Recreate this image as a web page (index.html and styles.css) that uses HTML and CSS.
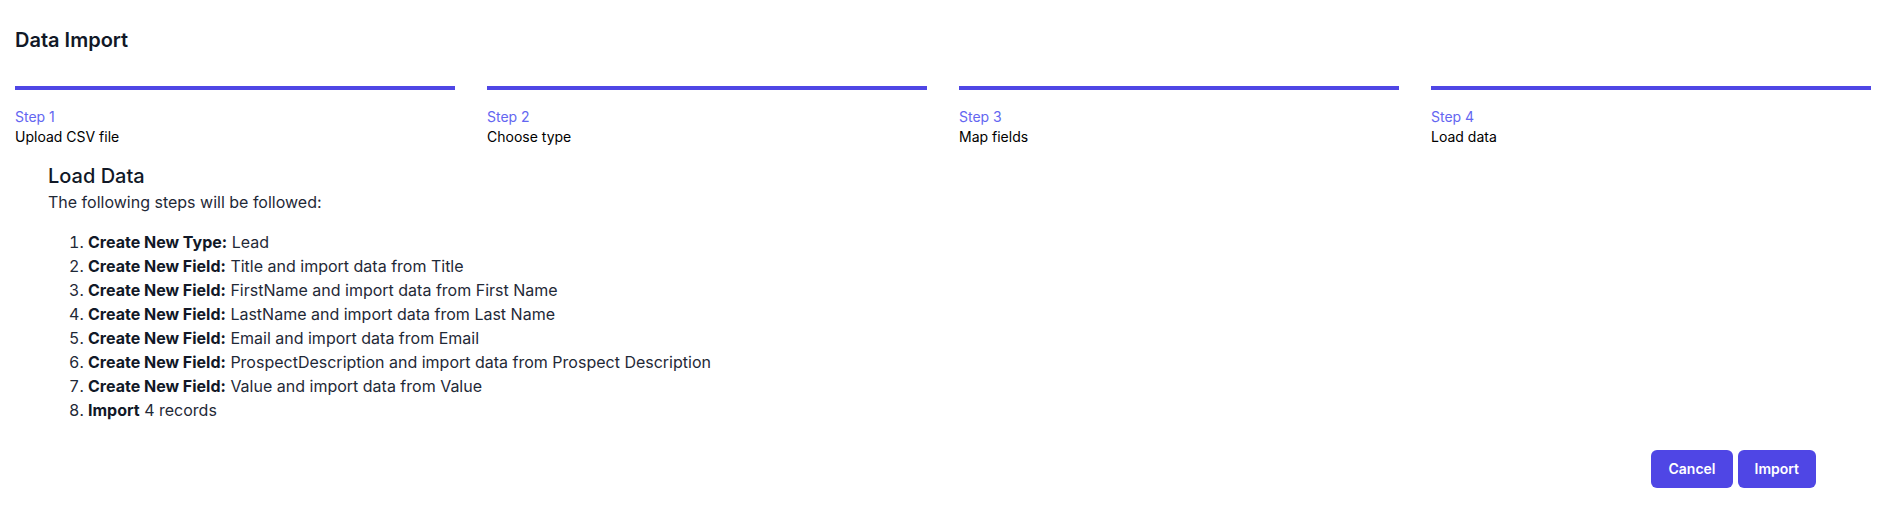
FILE: index.html
```html
<!DOCTYPE html>
<html lang="en">
<head>
<meta charset="utf-8">
<title>Data Import</title>
<link rel="stylesheet" href="styles.css">
</head>
<body>
<div class="page">
  <h1 class="page-title">Data Import</h1>
  <nav class="steps">
    <div class="step"><div class="step-num">Step 1</div><div class="step-name">Upload CSV file</div></div>
    <div class="step"><div class="step-num">Step 2</div><div class="step-name">Choose type</div></div>
    <div class="step"><div class="step-num">Step 3</div><div class="step-name">Map fields</div></div>
    <div class="step"><div class="step-num">Step 4</div><div class="step-name">Load data</div></div>
  </nav>
  <section class="content">
    <h2 class="content-title">Load Data</h2>
    <p class="content-intro">The following steps will be followed:</p>
    <ol class="plan">
      <li><b>Create New Type:</b> Lead</li>
      <li><b>Create New Field:</b> Title and import data from Title</li>
      <li><b>Create New Field:</b> FirstName and import data from First Name</li>
      <li><b>Create New Field:</b> LastName and import data from Last Name</li>
      <li><b>Create New Field:</b> Email and import data from Email</li>
      <li><b>Create New Field:</b> ProspectDescription and import data from Prospect Description</li>
      <li><b>Create New Field:</b> Value and import data from Value</li>
      <li><b>Import</b> 4 records</li>
    </ol>
  </section>
  <div class="actions">
    <button class="btn">Cancel</button>
    <button class="btn">Import</button>
  </div>
</div>
</body>
</html>
```
FILE: styles.css
```css
html, body {
  margin: 0;
  padding: 0;
  background: #ffffff;
}
body {
  font-family: Inter, "Noto Sans", sans-serif;
  color: #111827;
}
.page {
  padding: 26px 15px 0 15px;
}
.page-title {
  margin: 0;
  font-size: 20px;
  line-height: 28px;
  font-weight: 600;
  color: #111827;
}
.steps {
  margin-top: 32px;
  display: grid;
  grid-template-columns: repeat(4, 1fr);
  column-gap: 32px;
}
.step {
  border-top: 4px solid #4f46e5;
  padding-top: 17px;
  font-size: 14px;
  line-height: 20px;
}
.step-num {
  color: #6366f1;
  font-weight: 400;
}
.step-name {
  color: #000000;
  font-weight: 400;
}
.content {
  padding-left: 33px;
  margin-top: 15px;
}
.content-title {
  margin: 0;
  font-size: 20px;
  line-height: 28px;
  font-weight: 500;
  color: #111827;
}
.content-intro {
  margin: 0;
  font-size: 16px;
  line-height: 24px;
  color: #1f2937;
}
.plan {
  margin: 16px 0 0 0;
  padding-left: 40px;
  font-size: 16px;
  line-height: 24px;
  color: #1f2937;
}
.plan b {
  font-weight: 700;
  color: #111827;
}
.actions {
  display: flex;
  justify-content: flex-end;
  gap: 5px;
  margin-top: 28px;
  padding-right: 55px;
}
.btn {
  font-family: Inter, "Noto Sans", sans-serif;
  font-size: 14px;
  line-height: 20px;
  font-weight: 600;
  color: #ffffff;
  background: #4f46e5;
  border: 1px solid transparent;
  border-radius: 6px;
  padding: 8px 16px;
  cursor: pointer;
}
```
